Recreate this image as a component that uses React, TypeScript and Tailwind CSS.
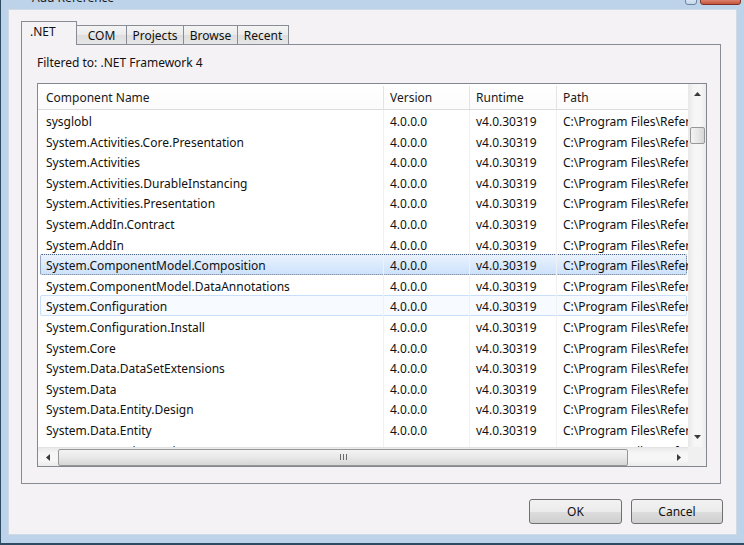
const names = [
  "sysglobl",
  "System.Activities.Core.Presentation",
  "System.Activities",
  "System.Activities.DurableInstancing",
  "System.Activities.Presentation",
  "System.AddIn.Contract",
  "System.AddIn",
  "System.ComponentModel.Composition",
  "System.ComponentModel.DataAnnotations",
  "System.Configuration",
  "System.Configuration.Install",
  "System.Core",
  "System.Data.DataSetExtensions",
  "System.Data",
  "System.Data.Entity.Design",
  "System.Data.Entity",
  "System.EnterpriseServices",
]

const tabs = [
  { label: "COM", w: "w-[51px]" },
  { label: "Projects", w: "w-[58px]" },
  { label: "Browse", w: "w-[55px]" },
  { label: "Recent", w: "w-[52px]" },
]

const Arrow = ({ dir }: { dir: "up" | "down" | "left" | "right" }) => {
  const pts = {
    up: "0,4 3.5,0 7,4",
    down: "0,0 7,0 3.5,4",
    left: "4,0 4,7 0,3.5",
    right: "0,0 4,3.5 0,7",
  }[dir]
  const vertical = dir === "up" || dir === "down"
  return (
    <svg width={vertical ? 7 : 4} height={vertical ? 4 : 7} viewBox={vertical ? "0 0 7 4" : "0 0 4 7"}>
      <polygon points={pts} fill="#3a3a3a" />
    </svg>
  )
}

const Row = ({ name, index }: { name: string; index: number }) => {
  const selected = index === 7
  const hover = index === 9
  return (
    <div className="relative flex h-[20.6px] shrink-0 items-center">
      {selected && (
        <div className="absolute inset-y-0 left-[2px] right-[1px] rounded-[2px] border border-dotted border-[#4f6584] bg-[linear-gradient(to_bottom,#eaf2fd,#cde2fc)]" />
      )}
      {hover && (
        <div className="absolute inset-y-0 left-[2px] right-[1px] rounded-[2px] border border-[#c8def9] bg-[#f7fafe]" />
      )}
      <div className="relative h-full w-[346px] shrink-0 overflow-hidden whitespace-nowrap border-r border-[#f1f1f1] pl-[8px] pt-[2px] leading-[20px]">
        {name}
      </div>
      <div className="relative h-full w-[86px] shrink-0 border-r border-[#f1f1f1] pl-[6px] pt-[2px] leading-[20px]">
        4.0.0.0
      </div>
      <div className="relative h-full w-[87px] shrink-0 border-r border-[#f1f1f1] pl-[6px] pt-[2px] leading-[20px]">
        v4.0.30319
      </div>
      <div className="relative h-full flex-1 overflow-hidden whitespace-nowrap pl-[6px] pt-[2px] leading-[20px]">
        C:\Program Files\Reference Assemblies\Microsoft
      </div>
    </div>
  )
}

export default function App() {
  return (
    <div className="flex h-[545px] w-[744px] flex-col overflow-hidden border-b-2 border-l border-[#2f4a63] bg-[#bdd3ea] font-['Noto_Sans',sans-serif] text-[12px] text-[#111]">
      {/* title bar, mostly cropped */}
      <div className="relative flex h-[9px] shrink-0 items-end overflow-hidden pl-[31px]">
        <span className="pb-[4px] leading-[14px] text-[#1b1b1b]">Add Reference</span>
        <div className="absolute right-[47px] top-[-4px] h-[9px] w-[12px] rounded-[3px] border border-[#6f839b] bg-[linear-gradient(to_bottom,#e4eef8,#c4d6ea)]" />
        <div className="absolute right-[3px] top-[-4px] h-[9px] w-[41px] rounded-[3px] border border-[#7b3328] bg-[linear-gradient(to_bottom,#e8a393,#c9533b)]" />
      </div>

      <div className="flex flex-1 px-[7px] pb-[8px]">
        <div className="flex flex-1 flex-col border border-[#cfdae6] bg-[#f5f2f5] pl-[12px] pt-[11px]">
          {/* tabs */}
          <div className="relative z-10 -mb-px flex h-[24px] items-end">
            <div className="flex h-[24px] w-[56px] items-center border border-b-0 border-[#898c95] bg-[#f5f2f5] pb-[3px] pl-[8px]">
              .NET
            </div>
            {tabs.map((t) => (
              <div
                key={t.label}
                className={`-ml-px flex h-[20px] ${t.w} items-center justify-center border border-[#898c95] bg-[linear-gradient(to_bottom,#f4f4f4,#ebebeb_50%,#dedede_51%,#e6e6e6)] pt-[1px] text-[#111]`}
              >
                {t.label}
              </div>
            ))}
          </div>

          {/* tab panel */}
          <div className="flex h-[440px] w-[700px] flex-col border border-[#898c95] bg-[#f5f2f5] pl-[15px] pt-[10px]">
            <div className="leading-[16px]">Filtered to: .NET Framework 4</div>

            <div className="mt-[12px] flex h-[384px] w-[670px] flex-col border border-[#828790] bg-white">
              <div className="flex min-h-0 flex-1">
                <div className="flex min-w-0 flex-1 flex-col overflow-hidden">
                  {/* header */}
                  <div className="flex h-[26px] shrink-0 items-stretch border-b border-[#dcdcdc] bg-[linear-gradient(to_bottom,#ffffff,#fbfbfb)] pt-[2px] text-[#1a1a1a]">
                    <div className="flex w-[346px] items-center border-r border-[#e4e4e6] pl-[8px]">Component Name</div>
                    <div className="flex w-[86px] items-center border-r border-[#e4e4e6] pl-[6px]">Version</div>
                    <div className="flex w-[87px] items-center border-r border-[#e4e4e6] pl-[6px]">Runtime</div>
                    <div className="flex flex-1 items-center pl-[6px]">Path</div>
                  </div>
                  {names.map((n, i) => (
                    <Row key={n} name={n} index={i} />
                  ))}
                </div>

                {/* vertical scrollbar */}
                <div className="flex w-[18px] shrink-0 flex-col border-l border-[#e9e9e9] bg-[linear-gradient(to_right,#eaeaea,#f6f6f6_30%,#f6f6f6_70%,#eaeaea)]">
                  <div className="flex h-[20px] items-center justify-center">
                    <Arrow dir="up" />
                  </div>
                  <div className="h-[23px]" />
                  <div className="mx-[1px] h-[17px] rounded-[2px] border border-[#979797] bg-[linear-gradient(to_right,#f3f3f3,#e8e8e8_50%,#d6d6d6)]" />
                  <div className="flex-1" />
                  <div className="flex h-[18px] items-center justify-center pb-[2px]">
                    <Arrow dir="down" />
                  </div>
                </div>
              </div>

              {/* horizontal scrollbar */}
              <div className="flex h-[19px] shrink-0">
                <div className="flex flex-1 items-center border-t border-[#e3e3e3] bg-[linear-gradient(to_bottom,#eaeaea,#f6f6f6_30%,#f6f6f6_70%,#eaeaea)]">
                  <div className="flex w-[20px] items-center justify-center">
                    <Arrow dir="left" />
                  </div>
                  <div className="flex h-[17px] w-[570px] items-center justify-center rounded-[2px] border border-[#979797] bg-[linear-gradient(to_bottom,#f3f3f3,#e8e8e8_50%,#d6d6d6)]">
                    <div className="flex gap-[2px]">
                      <div className="h-[6px] w-px bg-[#6a6a6a]" />
                      <div className="h-[6px] w-px bg-[#6a6a6a]" />
                      <div className="h-[6px] w-px bg-[#6a6a6a]" />
                    </div>
                  </div>
                  <div className="flex-1" />
                  <div className="flex w-[19px] items-center justify-center">
                    <Arrow dir="right" />
                  </div>
                </div>
                <div className="w-[18px] shrink-0 bg-[#f0f0f0]" />
              </div>
            </div>
          </div>

          {/* buttons */}
          <div className="mt-[15px] flex justify-end gap-[9px] pr-[13px]">
            <button className="h-[25px] w-[93px] rounded-[3px] border border-[#707070] bg-[linear-gradient(to_bottom,#f2f2f2,#ebebeb_50%,#dddddd_51%,#cfcfcf)] text-[#111]">
              OK
            </button>
            <button className="h-[25px] w-[92px] rounded-[3px] border border-[#707070] bg-[linear-gradient(to_bottom,#f2f2f2,#ebebeb_50%,#dddddd_51%,#cfcfcf)] text-[#111]">
              Cancel
            </button>
          </div>
        </div>
      </div>
    </div>
  )
}
